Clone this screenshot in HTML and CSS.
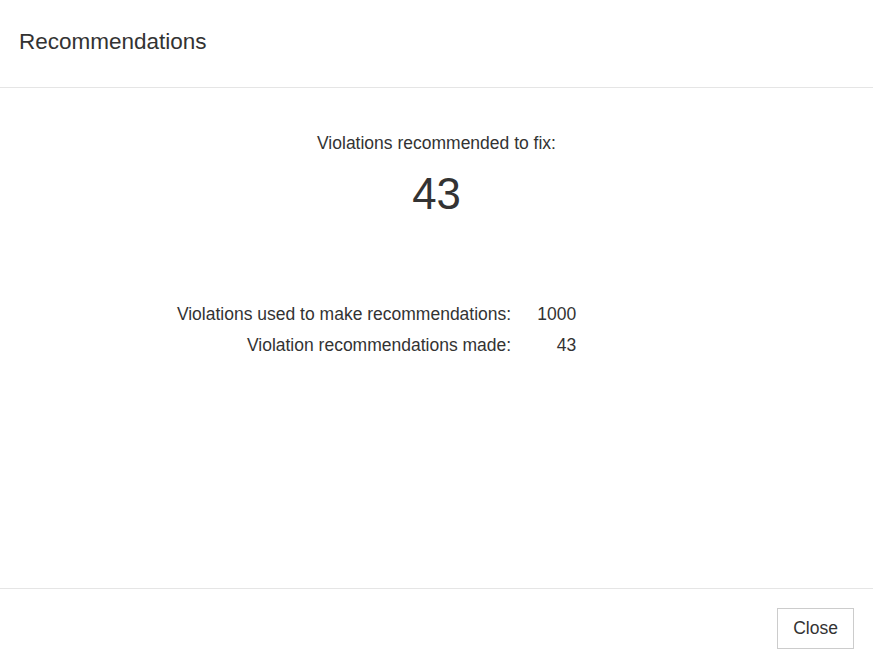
FILE: index.html
```html
<!DOCTYPE html>
<html lang="en">
<head>
  <meta charset="UTF-8">
  <title>Recommendations</title>
  <link rel="stylesheet" href="styles.css">
</head>
<body>
  <div class="modal">
    <!-- Header -->
    <div class="modal-header">
      <h4 class="modal-title">Recommendations</h4>
    </div>

    <!-- Body -->
    <div class="modal-body">
      <p class="fix-label">Violations recommended to fix:</p>
      <p class="fix-count">43</p>

      <div class="stats">
        <span class="stat-label">Violations used to make recommendations:</span>
        <span class="stat-value">1000</span>
        <span></span>
        <span class="stat-label">Violation recommendations made:</span>
        <span class="stat-value">43</span>
        <span></span>
      </div>
    </div>

    <!-- Footer -->
    <div class="modal-footer">
      <button type="button" class="btn">Close</button>
    </div>
  </div>
</body>
</html>
```

FILE: styles.css
```css
/* General Styles */
body {
  font-family: "Liberation Sans", Arial, sans-serif;
  margin: 0;
  padding: 0;
  color: #333;
  background: #fff;
}

.modal {
  display: flex;
  flex-direction: column;
  height: 668px;
}

.modal-header {
  padding: 29px 19px 0;
  box-sizing: border-box;
  height: 88px;
  border-bottom: 1px solid #e5e5e5;
}

.modal-title {
  margin: 0;
  font-size: 22.5px;
  font-weight: normal;
  line-height: normal;
}

.modal-body {
  flex: 1;
  padding-top: 43px;
  font-size: 17.5px;
}

.fix-label {
  margin: 0;
  text-align: center;
  line-height: 25px;
}

.fix-count {
  margin: 12px 0 0;
  text-align: center;
  font-size: 43.75px;
  line-height: 52.5px;
}

.stats {
  display: grid;
  grid-template-columns: 1fr 65px 34%;
  margin-top: 78px;
  line-height: 31px;
}

.stat-label,
.stat-value {
  text-align: right;
}

.modal-footer {
  display: flex;
  justify-content: flex-end;
  padding: 19px;
  border-top: 1px solid #e5e5e5;
}

.btn {
  font-family: inherit;
  font-size: 17.5px;
  line-height: 25px;
  color: #333;
  background: #fff;
  border: 1px solid #ccc;
  border-radius: 0;
  padding: 7px 15px;
  width: 77px;
  cursor: pointer;
}
```
